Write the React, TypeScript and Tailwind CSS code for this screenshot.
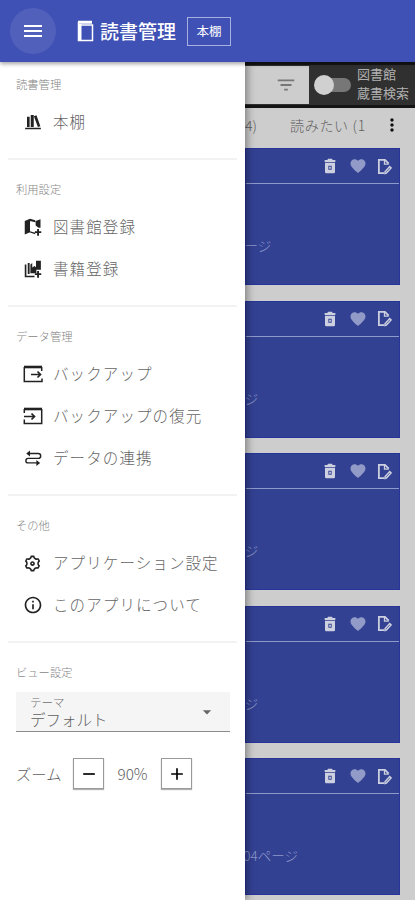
import React from "react";
import { MdMenu, MdFilterList, MdFavorite, MdMoreVert, MdAdd, MdRemove, MdArrowDropDown, MdInfoOutline } from "react-icons/md";
import { RiSettings3Line } from "react-icons/ri";

function Glyph({ children, className = "size-[18px]" }: { children: React.ReactNode; className?: string }) {
  return (
    <svg viewBox="0 0 24 24" className={className} fill="currentColor">
      {children}
    </svg>
  );
}

const Shelf = () => (
  <Glyph>
    <path d="M1.500 19.800h21v2h-21zM4 5h3.500v13.500H4zM9 2.500h4v16H9zM13.200 4.200l3.400-1.200 5.200 14.600-3.300 1.200z" />
  </Glyph>
);
const MapPlus = () => (
  <Glyph>
    <path d="M1 4l7-3v18l-7 3zM8 1l7 2v2.500L8 4zM8 17.500l7 2v2.200l-7-2.500zM15.500 4L22 1.500V13h-2.500l-4-3z" />
    <path d="M17.500 14.500H20v3h3V20h-3v3.500h-2.500V20h-3v-2.500h3z" />
  </Glyph>
);
const BooksPlus = () => (
  <Glyph>
    <path d="M1 6h2.200v15H14v2H1zM5 4h2.500v14.500H5zM8.500 6L11 4v6l3-2 2 1.500V1h6.500v12h-6v4.500h-8z" />
    <path d="M17.500 14.500H20v3h3V20h-3v3.500h-2.500V20h-3v-2.500h3z" />
  </Glyph>
);
const Export = () => (
  <svg viewBox="0 0 20 18" className="h-[18px] w-[20px]" fill="none" stroke="currentColor">
    <path d="M1 2h18" strokeWidth="2.600" />
    <path d="M1.300 2v14.500H19v-3M18.700 2v4" strokeWidth="1.500" />
    <path d="M8 9.500h9.500M14.500 6.500l3 3-3 3" strokeWidth="1.700" />
  </svg>
);
const Import = () => (
  <svg viewBox="0 0 20 18" className="h-[18px] w-[20px]" fill="none" stroke="currentColor">
    <path d="M1 2h18" strokeWidth="2.600" />
    <path d="M1.300 2v4M18.700 2v14.500H1.300v-4" strokeWidth="1.500" />
    <path d="M1 9.500h10.500M8.500 6.500l3 3-3 3" strokeWidth="1.700" />
  </svg>
);
const Link = () => (
  <Glyph>
    <path d="M5 6h14a3.200 3.200 0 010 6.500H5.500a3 3 0 000 6H19" fill="none" stroke="currentColor" strokeWidth="1.900" />
    <path d="M8 2v8L3 6zM16.500 14.500v8l5-4z" />
  </Glyph>
);
const Trash = () => (
  <Glyph className="mr-[1px] size-[16px]">
    <path fillRule="evenodd" d="M4 3h4l1-2h6l1 2h4v3H4zM4.500 7h15v14a2 2 0 01-2 2h-11a2 2 0 01-2-2zM9.500 11.500v6h5v-6z" />
    <path d="M10.800 13h2.400v3h-2.400z" />
  </Glyph>
);
const EditFile = () => (
  <svg viewBox="0 0 16 18" className="mr-[1px] h-[17px] w-[15px]" fill="none" stroke="currentColor" strokeWidth="1.900">
    <path d="M12.500 6L8.500 2H2v14h5.500" />
    <path d="M8 2v4.500h4.500" strokeWidth="1.400" />
    <path d="M8.500 16.500v-2l5-5.500 1.500 1.500-5 5.500z" strokeWidth="1.500" />
  </svg>
);

const groups = [
  { title: "読書管理", items: [{ icon: <Shelf />, label: "本棚" }] },
  { title: "利用設定", items: [{ icon: <MapPlus />, label: "図書館登録" }, { icon: <BooksPlus />, label: "書籍登録" }] },
  {
    title: "データ管理",
    items: [
      { icon: <Export />, label: "バックアップ" },
      { icon: <Import />, label: "バックアップの復元" },
      { icon: <Link />, label: "データの連携" },
    ],
  },
  {
    title: "その他",
    items: [
      { icon: <RiSettings3Line className="size-[19px]" />, label: "アプリケーション設定" },
      { icon: <MdInfoOutline className="size-[20px]" />, label: "このアプリについて" },
    ],
  },
];

function GroupTitle({ children }: { children: React.ReactNode }) {
  return <h2 className="mb-[5px] flex h-6 items-center pl-4 text-[11.300px] text-[#858585]">{children}</h2>;
}

function Drawer() {
  return (
    <aside className="z-10 h-full w-[245px] shrink-0 bg-white shadow-[2px_0_8px_rgba(0,0,0,0.400)]">
      {groups.map((g, i) => (
        <section key={g.title} className={i === 0 ? "pt-[10px]" : "pt-[17px]"}>
          <GroupTitle>{g.title}</GroupTitle>
          <ul className="mb-[15px]">
            {g.items.map((it) => (
              <li key={it.label} className="flex h-[42px] items-center pl-[21px] text-[#222]">
                <span className="mr-[9px] flex w-[23px] justify-center">{it.icon}</span>
                <span className="text-[15.500px] tracking-[1.100px] text-[#656565]">{it.label}</span>
              </li>
            ))}
          </ul>
          <hr className="mr-2 ml-2 h-[2px] border-0 bg-[#f2f2f2]" />
        </section>
      ))}
      <section className="pt-[17px]">
        <GroupTitle>ビュー設定</GroupTitle>
        <div className="mt-[8px] mr-[15px] ml-4 flex h-[40px] items-center justify-between border-b border-[#8c8c8c] bg-[#f5f5f5] pr-[13px] pl-[14px]">
          <div className="flex flex-col">
            <span className="text-[11.500px] leading-[15px] text-[#707070]">テーマ</span>
            <span className="text-[15.500px] leading-[18px] text-[#606060]">デフォルト</span>
          </div>
          <MdArrowDropDown className="size-5 text-[#666]" />
        </div>
        <div className="mt-[26px] flex items-center pl-4 text-[15.300px] text-[#606060]">
          <span className="w-[57px]">ズーム</span>
          <button className="flex size-[31px] items-center justify-center border border-[#999] bg-white text-black shadow-[0_1px_1px_rgba(0,0,0,0.300)]">
            <MdRemove className="size-[20px]" />
          </button>
          <span className="w-[57px] text-center">90%</span>
          <button className="flex size-[31px] items-center justify-center border border-[#999] bg-white text-black shadow-[0_1px_1px_rgba(0,0,0,0.300)]">
            <MdAdd className="size-[20px]" />
          </button>
        </div>
      </section>
    </aside>
  );
}

function BookCard({ pages, textClass }: { pages: string; textClass: string }) {
  return (
    <article className="h-[137px] shrink-0 border border-[#27349a] bg-[#334193]">
      <div className="flex h-[35px] items-center justify-end border-b border-[#8d9bcb] pr-[6px] text-[#cdd0df]">
        <Trash />
        <MdFavorite className="mx-[10px] size-[18px] text-[#929bc8]" />
        <EditFile />
      </div>
      <p className={"pt-[51px] text-[13.500px] leading-[20px] whitespace-nowrap text-[#8d98c9] " + textClass}>{pages}</p>
    </article>
  );
}

function Shelves() {
  return (
    <main className="flex w-[170px] flex-col overflow-hidden bg-[#cdcdcd]">
      <div className="flex h-[46px] shrink-0 items-center border-t-[3px] border-b-[3px] border-[#151515] bg-[#303030]">
        <div className="flex h-[38px] w-[64px] items-center justify-end bg-[#cdcdcd] pr-[12px]">
          <MdFilterList className="size-[22px] text-[#777]" />
        </div>
        <div className="ml-[5px] flex w-[38px] items-center">
          <span className="z-10 size-5 shrink-0 rounded-full bg-[#d0d0d0]" />
          <span className="-ml-[7px] h-[14px] w-6 rounded-r-full bg-[#777]" />
        </div>
        <p className="-mt-[4px] ml-[5px] text-[13px] leading-[19px] font-normal whitespace-nowrap text-[#b0b0b0]">
          図書館
          <br />
          蔵書検索
        </p>
      </div>
      <div className="flex h-[34px] shrink-0 items-center text-[14px] whitespace-nowrap text-[#606060]">
        <span className="flex w-[12px] justify-end">4)</span>
        <span className="ml-[33px] w-[93px] tracking-[0.700px]">読みたい (1</span>
        <MdMoreVert className="-ml-[1px] size-5 text-[#111]" />
      </div>
      <div className="mt-[6px] mr-[15px] flex flex-col gap-[15.500px]">
        <BookCard pages="ページ" textClass="-ml-[15px]" />
        <BookCard pages="ページ" textClass="-ml-[28px]" />
        <BookCard pages="ページ" textClass="-ml-[28px]" />
        <BookCard pages="ページ" textClass="-ml-[28px]" />
        <BookCard pages="304ページ" textClass="-ml-[10px]" />
      </div>
    </main>
  );
}

export default function App() {
  return (
    <div className="flex h-[900px] w-[415px] flex-col overflow-hidden bg-white font-['Noto_Sans_CJK_JP',sans-serif] font-light">
      <header className="z-20 flex h-[62px] shrink-0 items-center bg-[#3f51b5] pl-[10px] text-white shadow-[0_2px_4px_rgba(0,0,0,0.350)]">
        <button className="flex size-[46px] items-center justify-center rounded-full bg-[#5060bb]">
          <MdMenu className="size-[24px]" />
        </button>
        <svg viewBox="0 0 17 22" className="ml-[21px] h-[22px] w-[17px]" fill="none" stroke="currentColor">
          <path d="M1.500 2v18.500h14V5H3" strokeWidth="1.500" />
          <path d="M1 1.500h14M1 3h14" strokeWidth="1.500" />
          <path d="M3 4v16" strokeWidth="3" />
        </svg>
        <h1 className="ml-[6px] text-[19px] font-medium">読書管理</h1>
        <span className="ml-[11px] flex h-[29px] w-[44px] items-center justify-center border border-[#a8b0e0] text-[12.500px] font-normal">本棚</span>
      </header>
      <div className="flex h-[838px]">
        <Drawer />
        <Shelves />
      </div>
    </div>
  );
}
